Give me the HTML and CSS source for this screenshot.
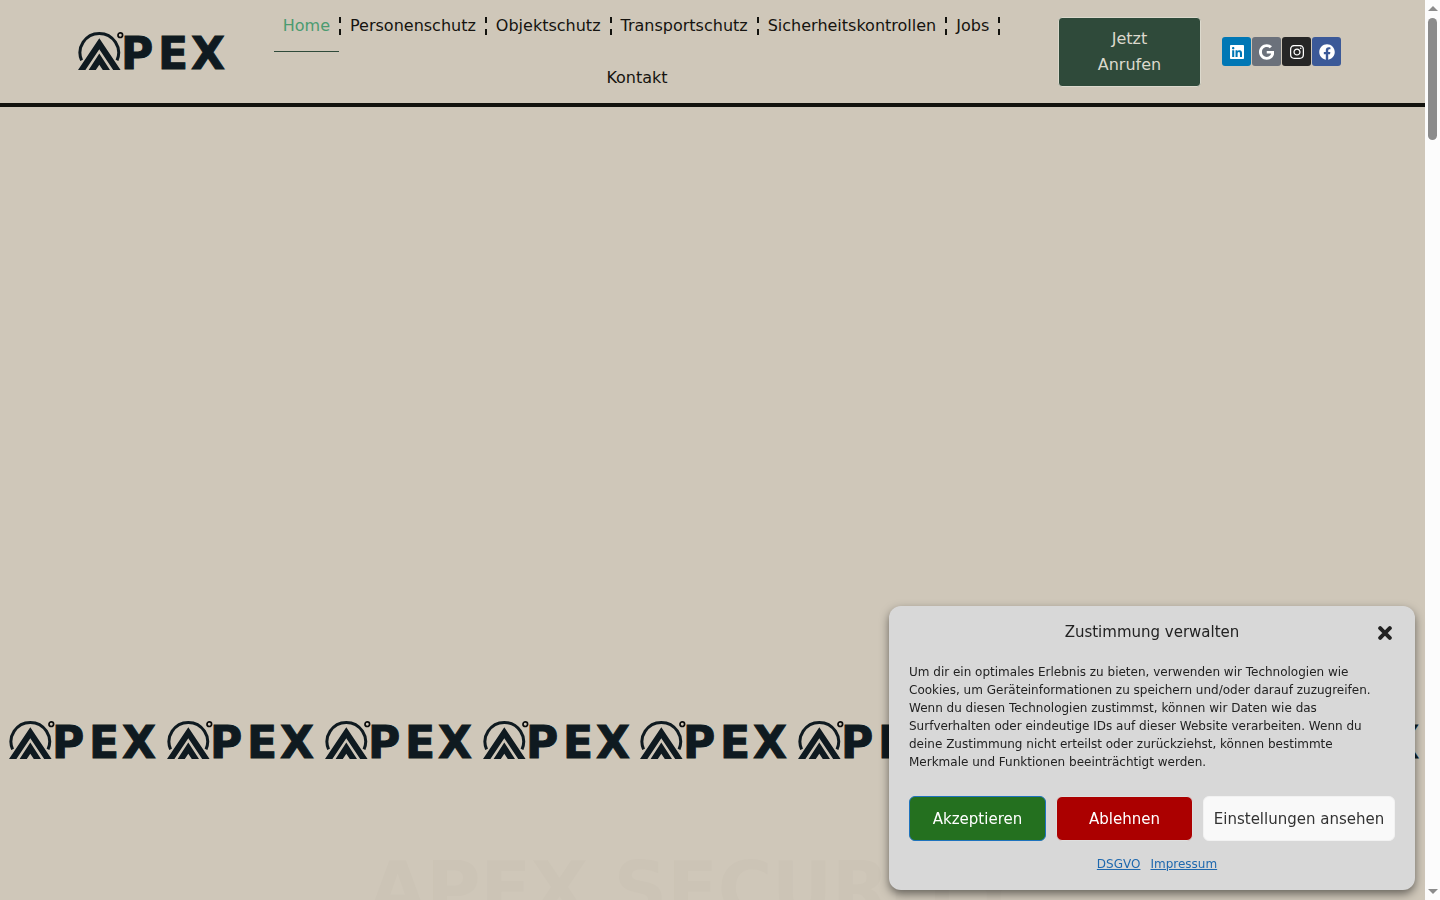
FILE: index.html
```html
<!DOCTYPE html>
<html lang="de">
<head>
    <meta charset="UTF-8">
    <meta name="viewport" content="width=device-width, initial-scale=1.0">
    <title>APEX Security</title>
    <link rel="stylesheet" href="styles.css">
</head>
<body>
    <!-- Shared logo symbol -->
    <svg class="sprite" aria-hidden="true">
        <symbol id="apex-logo" viewBox="0 0 148 41">
            <path d="M3.6 29.4A19.3 19.3 0 1 1 39 29.4" fill="none" stroke="#0f1a20" stroke-width="3"/>
            <path d="M0 39L21.3 7.3L42.6 39H35.2L21.3 18.2L7.4 39Z" fill="#0f1a20"/>
            <path d="M10.6 39L21.3 22.6L32 39H24.8L21.3 33.8L17.8 39Z" fill="#0f1a20"/>
            <circle cx="42.3" cy="4.2" r="2.3" fill="none" stroke="#0b0b0b" stroke-width="1.7"/>
            <text class="logo-text" x="43 80 113" y="38">PEX</text>
        </symbol>
    </svg>

    <div class="page">
        <header class="site-header">
            <a href="#" class="brand" aria-label="APEX Startseite">
                <svg class="logo"><use href="#apex-logo"/></svg>
            </a>

            <nav class="main-nav">
                <ul>
                    <li><a href="#" class="active">Home</a></li>
                    <li><a href="#">Personenschutz</a></li>
                    <li><a href="#">Objektschutz</a></li>
                    <li><a href="#">Transportschutz</a></li>
                    <li><a href="#">Sicherheitskontrollen</a></li>
                    <li><a href="#">Jobs</a></li>
                    <li><a href="#">Kontakt</a></li>
                </ul>
            </nav>

            <a href="#" class="call-button">Jetzt Anrufen</a>

            <div class="social">
                <a href="#" class="linkedin" aria-label="LinkedIn">
                    <svg viewBox="0 0 448 512"><path d="M416 32H31.9C14.3 32 0 46.5 0 64.3v383.4C0 465.500 14.300 480 31.900 480H416c17.600 0 32-14.500 32-32.300V64.300c0-17.800-14.400-32.300-32-32.300zM135.400 416H69V202.200h66.500V416zm-33.200-243c-21.300 0-38.500-17.300-38.500-38.500S80.900 96 102.200 96c21.200 0 38.500 17.300 38.500 38.500 0 21.300-17.200 38.500-38.500 38.500zm282.100 243h-66.400V312c0-24.800-.5-56.700-34.500-56.700-34.600 0-39.900 27-39.900 54.900V416h-66.400V202.200h63.700v29.200h.9c8.900-16.800 30.600-34.500 62.900-34.500 67.200 0 79.700 44.300 79.700 101.900V416z"/></svg>
                </a>
                <a href="#" class="google" aria-label="Google">
                    <svg viewBox="0 0 488 512"><path d="M488 261.800C488 403.300 391.100 504 248 504 110.800 504 0 393.200 0 256S110.800 8 248 8c66.800 0 123 24.500 166.300 64.900l-67.500 64.900C258.500 52.600 94.300 116.600 94.300 256c0 86.500 69.100 156.600 153.700 156.600 98.200 0 135-70.400 140.800-106.900H248v-85.300h236.100c2.300 12.700 3.900 24.900 3.900 41.400z"/></svg>
                </a>
                <a href="#" class="instagram" aria-label="Instagram">
                    <svg viewBox="0 0 448 512"><path d="M224.100 141c-63.600 0-114.900 51.300-114.900 114.900s51.300 114.900 114.900 114.900S339 319.500 339 255.900 287.700 141 224.100 141zm0 189.600c-41.100 0-74.700-33.500-74.700-74.700s33.500-74.700 74.700-74.700 74.700 33.500 74.700 74.700-33.600 74.700-74.700 74.700zm146.400-194.300c0 14.900-12 26.800-26.800 26.800-14.900 0-26.800-12-26.800-26.800s12-26.800 26.800-26.800 26.800 12 26.800 26.800zm76.100 27.200c-1.700-35.900-9.900-67.700-36.200-93.900-26.200-26.200-58-34.400-93.900-36.200-37-2.100-147.900-2.100-184.900 0-35.800 1.700-67.600 9.900-93.900 36.100s-34.400 58-36.200 93.900c-2.100 37-2.100 147.900 0 184.900 1.700 35.900 9.900 67.700 36.200 93.900s58 34.400 93.900 36.200c37 2.100 147.900 2.100 184.900 0 35.900-1.700 67.700-9.900 93.900-36.200 26.200-26.200 34.400-58 36.200-93.900 2.100-37 2.100-147.800 0-184.800zM398.800 388c-7.800 19.600-22.900 34.700-42.600 42.600-29.500 11.700-99.500 9-132.100 9s-102.700 2.600-132.100-9c-19.600-7.800-34.700-22.900-42.600-42.600-11.700-29.500-9-99.500-9-132.100s-2.600-102.700 9-132.100c7.800-19.600 22.900-34.700 42.600-42.600 29.500-11.700 99.500-9 132.100-9s102.700-2.600 132.100 9c19.600 7.800 34.700 22.900 42.600 42.600 11.700 29.500 9 99.500 9 132.100s2.700 102.700-9 132.100z"/></svg>
                </a>
                <a href="#" class="facebook" aria-label="Facebook">
                    <svg viewBox="0 0 512 512"><path d="M504 256C504 119 393 8 256 8S8 119 8 256c0 123.800 90.700 226.400 209.300 245V327.700h-63V256h63v-54.600c0-62.200 37-96.500 93.700-96.500 27.100 0 55.500 4.800 55.500 4.800v61h-31.300c-30.800 0-40.400 19.100-40.400 38.700V256h68.800l-11 71.700h-57.800V501C413.300 482.400 504 379.800 504 256z"/></svg>
                </a>
            </div>
        </header>

        <main>
            <section class="hero"></section>

            <div class="logo-strip">
                <svg class="logo"><use href="#apex-logo"/></svg>
                <svg class="logo"><use href="#apex-logo"/></svg>
                <svg class="logo"><use href="#apex-logo"/></svg>
                <svg class="logo"><use href="#apex-logo"/></svg>
                <svg class="logo"><use href="#apex-logo"/></svg>
                <svg class="logo"><use href="#apex-logo"/></svg>
                <svg class="logo"><use href="#apex-logo"/></svg>
                <svg class="logo"><use href="#apex-logo"/></svg>
                <svg class="logo"><use href="#apex-logo"/></svg>
            </div>

            <h1 class="headline">APEX SECURITY</h1>
        </main>
    </div>

    <div class="scrollbar" aria-hidden="true">
        <span class="arrow up"></span>
        <span class="thumb"></span>
        <span class="arrow down"></span>
    </div>

    <!-- Cookie consent -->
    <div class="consent" role="dialog" aria-labelledby="consent-title">
        <div class="consent-header">
            <div class="consent-title" id="consent-title">Zustimmung verwalten</div>
            <button type="button" class="consent-close" aria-label="Dialog schließen">
                <svg viewBox="0 0 14 14"><path d="M2.200 2.200L11.800 11.800M11.800 2.200L2.200 11.800"/></svg>
            </button>
        </div>

        <p class="consent-message">
            Um dir ein optimales Erlebnis zu bieten, verwenden wir Technologien wie Cookies, um Geräteinformationen zu speichern und/oder darauf zuzugreifen. Wenn du diesen Technologien zustimmst, können wir Daten wie das Surfverhalten oder eindeutige IDs auf dieser Website verarbeiten. Wenn du deine Zustimmung nicht erteilst oder zurückziehst, können bestimmte Merkmale und Funktionen beeinträchtigt werden.
        </p>

        <div class="consent-buttons">
            <button type="button" class="accept">Akzeptieren</button>
            <button type="button" class="deny">Ablehnen</button>
            <button type="button" class="settings">Einstellungen ansehen</button>
        </div>

        <div class="consent-links">
            <a href="#">DSGVO</a>
            <a href="#">Impressum</a>
        </div>
    </div>
</body>
</html>
```
FILE: styles.css
```css
* {
    margin: 0;
    padding: 0;
    box-sizing: border-box;
}

body {
    display: flex;
    height: 100vh;
    overflow: hidden;
    font-family: 'DejaVu Sans', Verdana, sans-serif;
    font-size: 16px;
    color: #15130f;
    background: #cfc7b9;
}

a {
    color: inherit;
    text-decoration: none;
}

.page {
    flex: 1;
    min-width: 0;
    overflow: hidden;
}

.sprite {
    position: absolute;
    width: 0;
    height: 0;
}

.logo {
    display: block;
    width: 148px;
    height: 41px;
}

.logo-text {
    font-size: 44px;
    font-weight: 700;
    fill: #0f1a20;
    stroke: #0f1a20;
    stroke-width: 1px;
}

/* Header */
.site-header {
    display: flex;
    align-items: center;
    padding: 0 84px 0 78px;
    border-bottom: 4px solid #12120e;
}

.main-nav {
    flex: 1;
    margin: 0 31px 0 21px;
}

.main-nav ul {
    display: flex;
    flex-wrap: wrap;
    justify-content: center;
    row-gap: 1px;
    list-style: none;
}

.main-nav li {
    display: flex;
    align-items: center;
}

.main-nav li:not(:last-child)::after {
    content: "";
    height: 18px;
    border-left: 2px dashed #12120e;
}

.main-nav a {
    position: relative;
    padding: 13px 9px 12px;
    line-height: 26px;
}

.main-nav a.active {
    color: #4b9b70;
}

.main-nav a.active::after {
    content: "";
    position: absolute;
    left: 0;
    right: 0;
    bottom: -1px;
    height: 1px;
    background: #2f4a3a;
}

.call-button {
    width: 143px;
    padding: 8px 36px;
    border: 1px solid #dcd9cd;
    border-radius: 4px;
    background: #2f4a3a;
    color: #dcd9cd;
    line-height: 26px;
    text-align: center;
}

.social {
    display: flex;
    gap: 1px;
    margin-left: 21px;
}

.social a {
    display: flex;
    align-items: center;
    justify-content: center;
    width: 29px;
    height: 29px;
    border-radius: 3px;
}

.social svg {
    height: 16px;
    fill: #ffffff;
}

.linkedin {
    background: #0077b5;
}

.google {
    background: #6b717b;
}

.instagram {
    background: #262626;
}

.facebook {
    background: #3b5998;
}

/* Content */
.hero {
    min-height: 68vh;
}

.logo-strip {
    display: grid;
    grid-template-columns: repeat(9, 1fr);
    justify-items: center;
    padding: 1px 0 0 4px;
}

.headline {
    margin: 91px 0 0 369px;
    font-size: 74px;
    line-height: 74px;
    white-space: nowrap;
    color: #ccc4b6;
}

/* Scrollbar */
.scrollbar {
    display: flex;
    flex-direction: column;
    align-items: center;
    width: 15px;
    padding: 6px 0;
    background: #fcfcfc;
}

.thumb {
    width: 9px;
    height: 122px;
    margin-top: 7px;
    border-radius: 5px;
    background: #8b8b8b;
}

.arrow {
    border: 5px solid transparent;
}

.arrow.up {
    border-top: 0;
    border-bottom-color: #8b8b8b;
}

.arrow.down {
    margin-top: auto;
    border-bottom: 0;
    border-top-color: #8b8b8b;
}

/* Cookie consent */
.consent {
    position: fixed;
    right: 25px;
    bottom: 10px;
    width: 526px;
    padding: 16px 20px 17px;
    border-radius: 12px;
    background: #d8d8d8;
    color: #222222;
    box-shadow: 0 4px 10px rgba(0, 0, 0, 0.5);
}

.consent-header {
    display: grid;
    grid-template-columns: 20px 1fr 20px;
    align-items: center;
    margin-bottom: 20px;
}

.consent-title {
    grid-column: 2;
    font-size: 15px;
    line-height: 21px;
    text-align: center;
}

.consent-close {
    display: flex;
    justify-content: center;
    border: 0;
    background: none;
    cursor: pointer;
}

.consent-close svg {
    width: 14px;
    height: 14px;
    stroke: #222222;
    stroke-width: 4;
    stroke-linecap: round;
}

.consent-message {
    margin-bottom: 25px;
    font-size: 12px;
    line-height: 18px;
}

.consent-buttons {
    display: grid;
    grid-template-columns: 1fr 1fr 192px;
    gap: 10px;
    margin-bottom: 14px;
}

.consent-buttons button {
    height: 45px;
    border: 1px solid;
    border-radius: 6px;
    font-family: inherit;
    font-size: 15px;
    cursor: pointer;
}

.consent-buttons .accept {
    border-color: #1e73be;
    background: #24701f;
    color: #ffffff;
}

.consent-buttons .deny {
    border-color: #dedede;
    background: #ab0000;
    color: #ffffff;
}

.consent-buttons .settings {
    border-color: #f2f2f2;
    background: #f9f9f9;
    color: #333333;
}

.consent-links {
    display: flex;
    justify-content: center;
    font-size: 12px;
    line-height: 18px;
}

.consent-links a {
    margin-left: 10px;
    color: #1e68ae;
    text-decoration: underline;
}
```
